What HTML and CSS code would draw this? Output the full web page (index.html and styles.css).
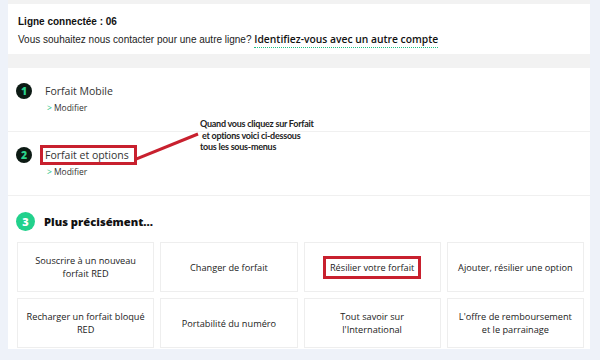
FILE: index.html
```html
<!DOCTYPE html>
<html lang="fr">
<head>
<meta charset="utf-8">
<link rel="stylesheet" href="styles.css">
</head>
<body>
<div class="page">
  <section class="card line-card">
    <div class="line-title">Ligne connectée : 06</div>
    <div class="line-sub">Vous souhaitez nous contacter pour une autre ligne? <a class="switch" href="#">Identifiez-vous avec un autre compte</a></div>
  </section>
  <section class="card steps">
    <div class="step">
      <span class="num dark">1</span>
      <div class="step-body">
        <div class="step-title">Forfait Mobile</div>
        <div class="modify"><span class="chev">&gt;</span>Modifier</div>
      </div>
    </div>
    <div class="step">
      <span class="num dark">2</span>
      <div class="step-body">
        <div class="step-title"><span class="boxed">Forfait et options</span></div>
        <div class="modify"><span class="chev">&gt;</span>Modifier</div>
      </div>
    </div>
    <div class="step step-last">
      <div class="step-head">
        <span class="num green">3</span>
        <div class="step-title strong">Plus précisément...</div>
      </div>
      <div class="tiles">
        <div class="tile">Souscrire à un nouveau<br>forfait RED</div>
        <div class="tile">Changer de forfait</div>
        <div class="tile"><span class="boxed tile-box">Résilier votre forfait</span></div>
        <div class="tile">Ajouter, résilier une option</div>
        <div class="tile">Recharger un forfait bloqué<br>RED</div>
        <div class="tile">Portabilité du numéro</div>
        <div class="tile">Tout savoir sur<br>l'International</div>
        <div class="tile">L'offre de remboursement<br>et le parrainage</div>
      </div>
    </div>
    <svg class="arrow" width="80" height="40" viewBox="0 0 80 40"><line x1="0" y1="31" x2="62" y2="6" stroke="#c8202e" stroke-width="3"/></svg>
    <div class="note">Quand vous cliquez sur Forfait<br>&nbsp;et options voici ci-dessous<br>tous les sous-menus</div>
  </section>
</div>
</body>
</html>
```
FILE: styles.css
```css
html, body { margin: 0; padding: 0; }
body { background: #eef2f9; font-family: "Liberation Sans", Arial, sans-serif; color: #222; width: 600px; height: 360px; overflow: hidden; }
.page { margin: 0 10px 0 8px; width: 582px; background: #f2f2f2; padding-top: 4px; }
.card { background: #fff; }
.line-card { height: 50px; box-sizing: border-box; padding: 11px 10px 0 10px; }
.line-title { font-weight: bold; font-size: 10px; line-height: 14px; color: #111; }
.line-sub { font-size: 10px; line-height: 17px; margin-top: 2px; color: #222; }
.switch { font-family: "Open Sans", sans-serif; font-weight: 600; font-size: 10.3px; color: #111; text-decoration: none; border-bottom: 1.5px dotted #1dbf83; padding-bottom: 1px; }
.steps { margin-top: 14px; position: relative; padding-bottom: 1px; }
.step { display: flex; gap: 13px; padding: 15px 8px 0 8px; height: 64px; box-sizing: border-box; border-bottom: 1px solid #f0f0f0; }
.step-last { display: block; border-bottom: 0; height: auto; padding: 16px 0 0 0; }
.step-head { display: flex; gap: 9px; align-items: center; padding-left: 8px; }
.num { width: 16px; height: 16px; border-radius: 50%; display: flex; align-items: center; justify-content: center; font-family: "Open Sans", sans-serif; font-weight: 800; font-size: 10.5px; flex: none; }
.num.dark { background: #0c1a14; color: #2ad38d; }
.num.green { width: 19px; height: 19px; background: #22d18c; color: #fff; font-size: 11px; }
.step-title { font-family: "Open Sans", sans-serif; font-size: 10.5px; line-height: 16px; color: #333; }
.step-title.strong { font-weight: 800; color: #111; font-size: 11.2px; }
.modify { font-family: "Open Sans", sans-serif; font-size: 8.5px; line-height: 14px; color: #333; margin-top: 2px; padding-left: 2px; }
.chev { color: #1dbf83; margin-right: 2px; }
.boxed { position: relative; }
.boxed::after { content: ""; position: absolute; left: -5px; right: -8px; top: -3px; bottom: -3px; border: 3px solid #c8202e; }
.tile-box::after { left: -7px; right: -7px; top: -5px; bottom: -5px; }
.tiles { display: grid; grid-template-columns: repeat(4, 1fr); grid-auto-rows: 50px; gap: 6px; margin: 11px 6px 0 9px; }
.tile { border: 1px solid #eeeeee; display: flex; align-items: center; justify-content: center; text-align: center; font-family: "Open Sans", sans-serif; font-size: 9.2px; line-height: 13px; color: #222; }
.arrow { position: absolute; left: 128px; top: 60px; }
.note { position: absolute; left: 192px; top: 50px; font-family: Lato, sans-serif; font-weight: 700; font-size: 9px; letter-spacing: -0.25px; line-height: 11.5px; color: #222; white-space: nowrap; }
```
